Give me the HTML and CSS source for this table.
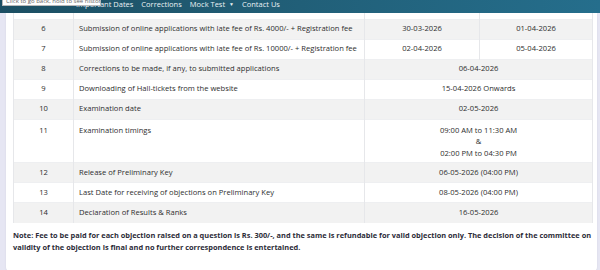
FILE: index.html
```html
<!DOCTYPE html>
<html>
<head>
<meta charset="utf-8">
<link rel="stylesheet" href="styles.css">
</head>
<body>
<nav class="nav">
  <div class="tip">Click to go back, hold to see history</div>
  <ul class="menu">
    <li>Important Dates</li>
    <li>Corrections</li>
    <li>Mock Test <span class="caret">&#9660;</span></li>
    <li>Contact Us</li>
  </ul>
</nav>
<main class="page">
  <section class="card">
    <table class="dates">
      <tr class="cut"><td></td><td></td><td></td><td></td></tr>
      <tr class="alt"><td class="num">6</td><td class="ev">Submission of online applications with late fee of Rs. 4000/- + Registration fee</td><td>30-03-2026</td><td>01-04-2026</td></tr>
      <tr><td class="num">7</td><td class="ev">Submission of online applications with late fee of Rs. 10000/- + Registration fee</td><td>02-04-2026</td><td>05-04-2026</td></tr>
      <tr class="alt"><td class="num">8</td><td class="ev">Corrections to be made, if any, to submitted applications</td><td colspan="2">06-04-2026</td></tr>
      <tr><td class="num">9</td><td class="ev">Downloading of Hall-tickets from the website</td><td colspan="2">15-04-2026 Onwards</td></tr>
      <tr class="alt"><td class="num">10</td><td class="ev">Examination date</td><td colspan="2">02-05-2026</td></tr>
      <tr class="tall"><td class="num top">11</td><td class="ev top">Examination timings</td><td colspan="2">09:00 AM to 11:30 AM<br>&amp;<br>02:00 PM to 04:30 PM</td></tr>
      <tr class="alt"><td class="num">12</td><td class="ev">Release of Preliminary Key</td><td colspan="2">06-05-2026 (04:00 PM)</td></tr>
      <tr><td class="num">13</td><td class="ev">Last Date for receiving of objections on Preliminary Key</td><td colspan="2">08-05-2026 (04:00 PM)</td></tr>
      <tr class="alt"><td class="num">14</td><td class="ev">Declaration of Results &amp; Ranks</td><td colspan="2">16-05-2026</td></tr>
    </table>
    <p class="note">Note: Fee to be paid for each objection raised on a question is Rs. 300/-, and the same is refundable for valid objection only. The decision of the committee on validity of the objection is final and no further correspondence is entertained.</p>
  </section>
</main>
</body>
</html>
```

FILE: styles.css
```css
* { box-sizing: border-box; }
html, body { margin: 0; padding: 0; }
body {
  width: 600px;
  height: 270px;
  overflow: hidden;
  background: #e6e6f3;
  font-family: "Open Sans", "Liberation Sans", sans-serif;
  color: #333;
}
.nav {
  position: relative;
  height: 13px;
  background: linear-gradient(90deg, #1c4f63 0%, #215f78 50%, #256e8c 100%);
  overflow: hidden;
}
.menu {
  list-style: none;
  margin: 0;
  padding: 0 0 0 76px;
  display: flex;
  gap: 8px;
  color: #eaf1f5;
  font-size: 7.5px;
  line-height: 8px;
  white-space: nowrap;
}
.caret { font-size: 5px; vertical-align: 1px; margin-left: 2px; }
.tip {
  position: absolute;
  left: 2px;
  top: -4px;
  width: 99px;
  height: 10px;
  background: #fff;
  border: 1px solid #b9b9b9;
  color: #666;
  font-size: 6px;
  line-height: 8px;
  padding-left: 3px;
  white-space: nowrap;
  overflow: hidden;
  z-index: 2;
}
.page {
  padding: 0 3px 4px 6px;
}
.card {
  background: #fff;
  padding: 0 4px 12px 7px;
  border-radius: 0 0 4px 4px;
  box-shadow: 0 1px 2px rgba(0,0,0,0.08);
}
.dates {
  width: 580px;
  border-collapse: collapse;
  font-size: 7.6px;
  color: #2e2e2e;
}
.dates td {
  border-left: 1px solid #e6e7ea;
  border-right: 1px solid #e6e7ea;
  border-top: 1px solid #eeeff1;
  text-align: center;
  vertical-align: middle;
  height: 20px;
  padding: 0 4px;
  line-height: 11.5px;
}
.dates td.ev { text-align: left; padding-left: 5px; }
.dates td.num { width: 60px; }
.dates tr td:nth-child(2) { width: 291px; }
.dates tr td:nth-child(3) { width: 115px; }
.dates tr.cut td { height: 6px; border-top: none; }
.dates tr.alt td { background: #f2f2f2; }
.dates tr.tall td { height: 43px; padding-top: 5px; padding-bottom: 3px; }
.dates td.top { vertical-align: top; padding-top: 4px; }
.note {
  margin: 6px 0 0 0;
  padding: 0 0 6px 0;
  font-weight: 700;
  font-size: 7.4px;
  line-height: 12px;
  color: #2c2c38;
}
```
